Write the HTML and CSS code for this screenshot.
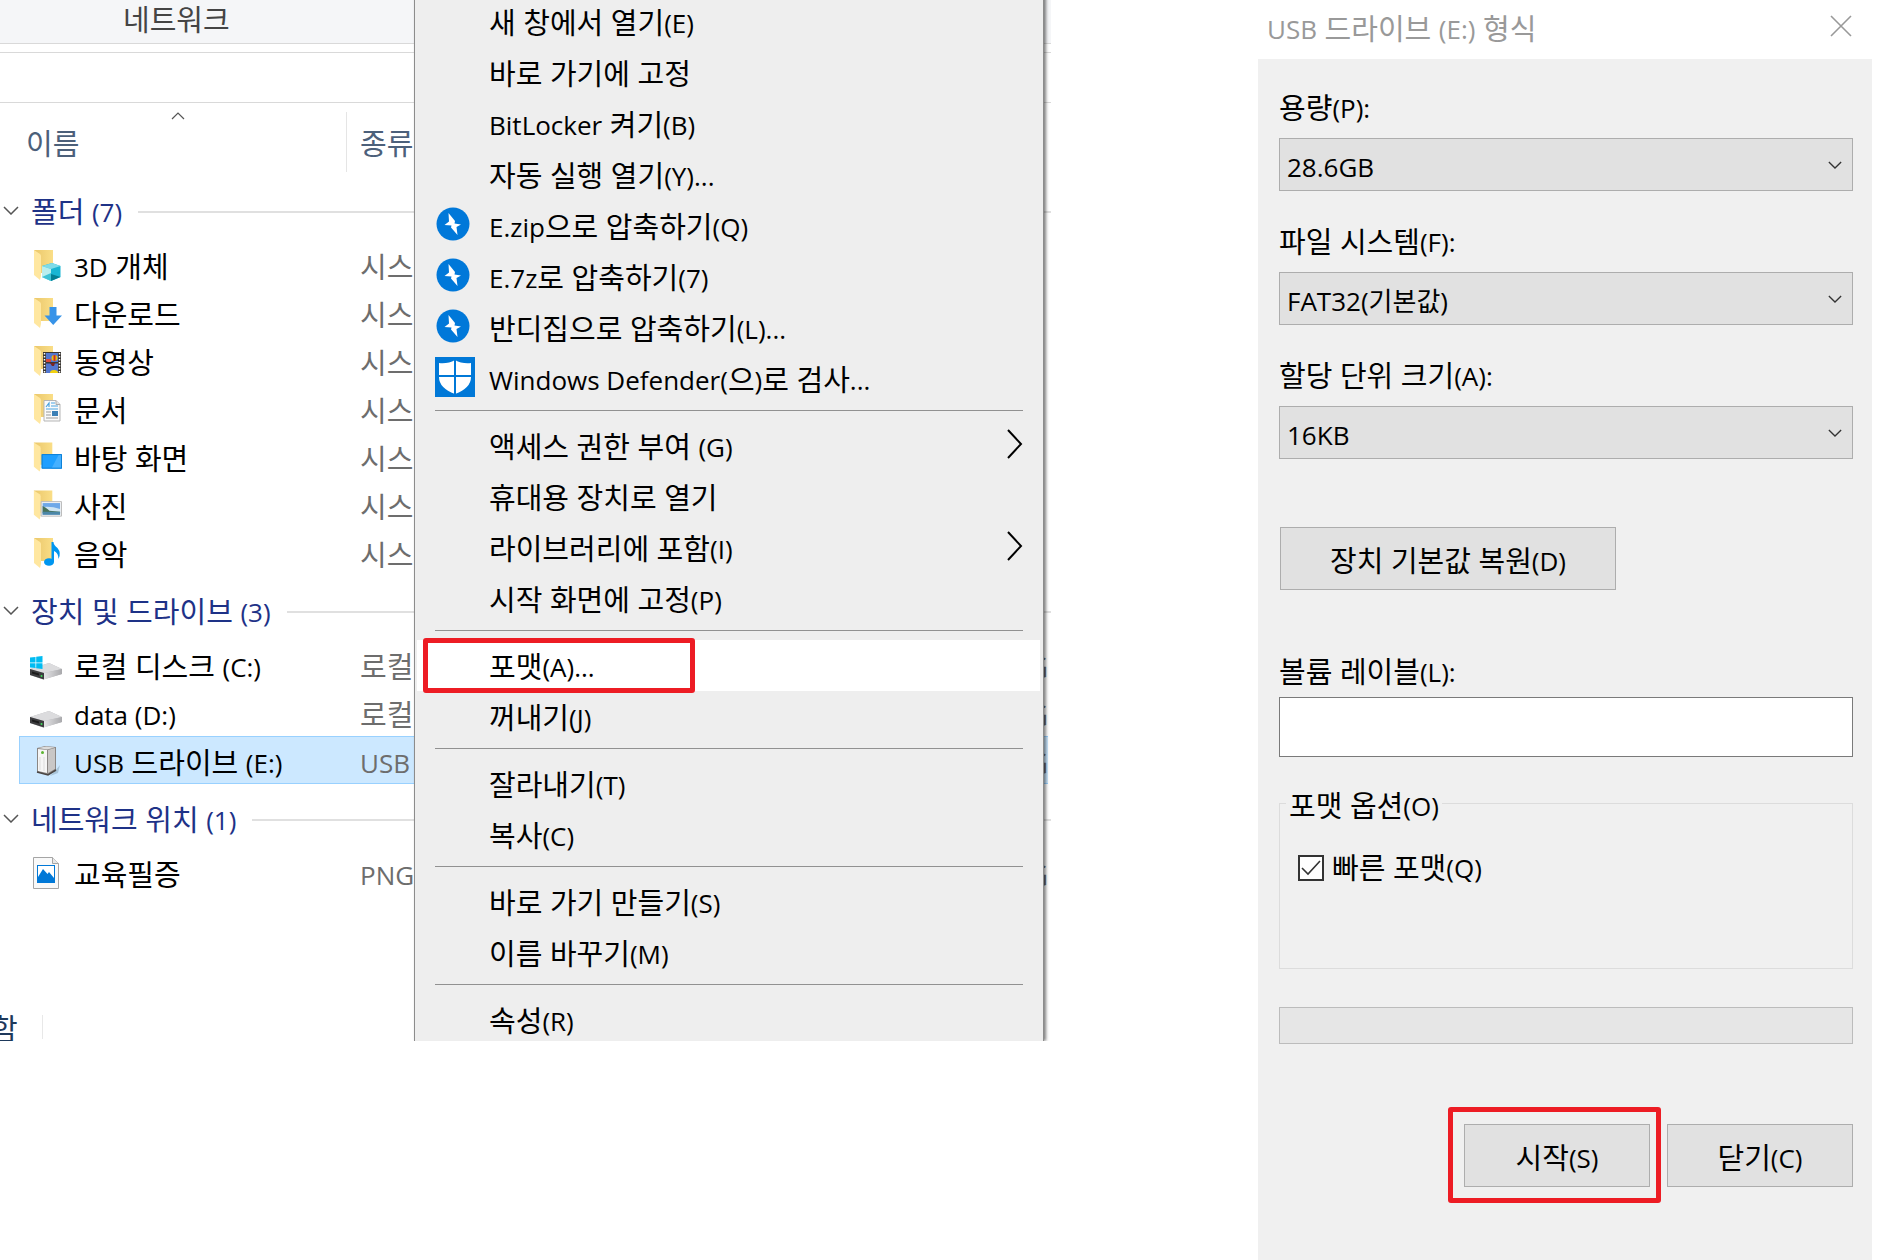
FILE: index.html
```html
<!doctype html>
<html lang="ko">
<head>
  <meta charset="utf-8">
  <title>USB 드라이브 포맷</title>
  <link rel="stylesheet" href="styles.css">
</head>
<body>
  <svg class="defs">
    <defs>
      <linearGradient id="gold" x1="0" y1="0" x2="1" y2="0">
        <stop offset="0" stop-color="#eac76b"/>
        <stop offset="1" stop-color="#fade87"/>
      </linearGradient>
      <linearGradient id="metal" x1="0" y1="0" x2="1" y2="0">
        <stop offset="0" stop-color="#e4e4e6"/>
        <stop offset="1" stop-color="#a9a9ac"/>
      </linearGradient>
    </defs>
    <symbol id="folder" viewBox="0 0 32 32">
      <path d="M4 1h19v23H9z" fill="url(#gold)"/>
      <path d="M4 1l6 4q1 1 1 2v20l-1 4-6-5z" fill="#ffe7a0"/>
    </symbol>
    <symbol id="drive" viewBox="0 0 32 32">
      <path d="M0 20L19 14l13 6v5L13 30.500 0 26z" fill="#b9b9bc"/>
      <path d="M0 20L19 14l13 6-18 4z" fill="#dcdcde"/>
      <path d="M14 24l18-4v5l-18 5.500z" fill="url(#metal)"/>
      <path d="M0 20l14 4v6.500L0 26z" fill="#3d3d3f"/>
      <path d="M2 22.500l7 2v2l-7-2z" fill="#1c1c1c"/>
      <circle cx="11.500" cy="27" r="1" fill="#3fe05a"/>
    </symbol>
    <symbol id="down" viewBox="0 0 16 9">
      <path d="M1 1l7 7 7-7" fill="none" stroke="currentColor" stroke-width="1.500"/>
    </symbol>
    <symbol id="more" viewBox="0 0 16 30">
      <path d="M1 1l13 14L1 29" fill="none" stroke="#000" stroke-width="2"/>
    </symbol>
    <symbol id="bolt" viewBox="0 0 34 34">
      <circle cx="17" cy="17" r="16.500" fill="#0078d9"/>
      <path d="M12.500 6L19 14l-.5 2.500 6.500 1-4.500 2.500 1 8-6.500-7.500.5-2-7-.5 4.500-3.500z" fill="#fff"/>
    </symbol>
  </svg>

  <main class="explorer">
    <div class="ribbon">네트워크</div>
    <div class="address"></div>
    <table class="files">
      <colgroup>
        <col class="col-name">
        <col class="col-type">
        <col>
      </colgroup>
      <thead>
        <tr>
          <th>이름<svg class="sort" viewBox="0 0 14 8"><path d="M1 7l6-6 6 6" fill="none" stroke="#555" stroke-width="1.200"/></svg></th>
          <th>종류</th>
          <th></th>
        </tr>
      </thead>
      <tbody>
        <tr class="group">
          <th colspan="3"><div><svg><use href="#down"/></svg><span>폴더 <span class="en">(7)</span></span></div></th>
        </tr>
        <tr>
          <td><div><svg viewBox="0 0 32 32"><use href="#folder"/><path d="M12 17l10-3 8.500 3v11L21 32l-9-4z" fill="#19b5d3"/><path d="M12 17l10-3 8.500 3L21 20z" fill="#7fdbe8"/><path d="M12 17l9 3v12l-9-4z" fill="#b9eeee"/><path d="M12 28l9-4v8z" fill="#3fc3d6"/><path d="M21 32l9.500-4L21 25z" fill="#047e93"/></svg><span><span class="en">3D</span> 개체</span></div></td>
          <td>시스</td>
          <td></td>
        </tr>
        <tr>
          <td><div><svg viewBox="0 0 32 32"><use href="#folder"/><path d="M19.500 10h7v8.500H32L23.200 28l-8.700-9.500h5z" fill="#3793e8"/></svg>다운로드</div></td>
          <td>시스</td>
          <td></td>
        </tr>
        <tr>
          <td><div><svg viewBox="0 0 32 32"><use href="#folder"/><path d="M13 7h18v21H13z" fill="#3a3632"/><path d="M16 8h12v9H16zM16 18.500h12V28H16z" fill="#5377cf"/><path d="M14.500 8v20M29.500 8v20" stroke="#fff" stroke-width="1.500" stroke-dasharray="1.500 1.500"/><circle cx="24.500" cy="13" r="3" fill="#e8bd13"/><path d="M23.500 10h2v6h-2z" fill="#c9302c"/><path d="M16 14h5v3h-5z" fill="#d8483a"/><path d="M20 28q0-3 4-3t4 3z" fill="#f2d10f"/><path d="M20 18h5l-1 3h-2z" fill="#7a2520"/></svg>동영상</div></td>
          <td>시스</td>
          <td></td>
        </tr>
        <tr>
          <td><div><svg viewBox="0 0 32 32"><use href="#folder"/><path d="M14 7.500h12l4 4V28H14z" fill="#fafafa" stroke="#b5b5b5"/><path d="M26 7.500v4h4" fill="#e4e4e4" stroke="#aaa"/><path d="M16 14l3-4v4M21 10h4M21 13h7M16 16h12" fill="none" stroke="#4aa3e0" stroke-width="1.200"/><path d="M16 19h5M16 22h5M16 25h12" stroke="#999"/><path d="M22 18h6v5h-6z" fill="#3b7fb5"/></svg>문서</div></td>
          <td>시스</td>
          <td></td>
        </tr>
        <tr>
          <td><div><svg viewBox="0 0 33 32"><use href="#folder" width="32" height="32"/><path d="M12 13h21v15H12z" fill="#1e9fff"/><path d="M22 28l8-15h3v15z" fill="#45b0ff"/><path d="M12.500 13.500h20v14h-20z" fill="none" stroke="#0c7fd6"/></svg>바탕 화면</div></td>
          <td>시스</td>
          <td></td>
        </tr>
        <tr>
          <td><div><svg viewBox="0 0 33 32"><use href="#folder" width="32" height="32"/><path d="M11.500 12.500h21v15h-21z" fill="#f4f4f4" stroke="#bbb"/><path d="M13 14h18v12H13z" fill="#6ea8e8"/><path d="M13 18q9-1 18 2v4H13z" fill="#cfe5f3"/><path d="M13 17q4 2 7 5l11 1v1H13z" fill="#47725a"/><path d="M13 23h18v3H13z" fill="#4c87a6"/></svg>사진</div></td>
          <td>시스</td>
          <td></td>
        </tr>
        <tr>
          <td><div><svg viewBox="0 0 32 32"><use href="#folder"/><ellipse cx="19" cy="25" rx="5" ry="3.800" fill="#0096f0"/><path d="M21.500 25V5h2q0 3 4 6 4 5 1 11 0-6-4.500-8v11z" fill="#0096f0"/></svg>음악</div></td>
          <td>시스</td>
          <td></td>
        </tr>
      </tbody>
      <tbody>
        <tr class="group">
          <th colspan="3"><div><svg><use href="#down"/></svg><span>장치 및 드라이브 <span class="en">(3)</span></span></div></th>
        </tr>
        <tr>
          <td><div><svg viewBox="0 0 32 32"><use href="#drive"/><path d="M0 8.500L5.500 8v5.500H0zM6.200 7.800L12.500 7v6.500H6.200zM0 14.200h5.500V19L0 18.500zM6.200 14.200h6.300V20l-6.300-.8z" fill="#00bcf2"/></svg><span>로컬 디스크 <span class="en">(C:)</span></span></div></td>
          <td>로컬</td>
          <td>G</td>
        </tr>
        <tr>
          <td><div><svg viewBox="0 0 32 32"><use href="#drive"/></svg><span class="en">data (D:)</span></div></td>
          <td>로컬</td>
          <td>G</td>
        </tr>
        <tr class="selected">
          <td><div><svg viewBox="0 0 32 32"><path d="M24 27l6-7-2 8-8 3z" fill="#a9c5da"/><path d="M7 3l8-2 11 1v23l-8 5-11-3z" fill="#8a8684"/><path d="M8 4l9 1v23l-9-2z" fill="#f6f6f6"/><path d="M18 5l7-2v21l-7 4z" fill="#c9c7c6"/><path d="M8 3l8-1.500 9 1L17 4.500z" fill="#dcdcdc"/><circle cx="12.500" cy="7.500" r="1.500" fill="#5cb531"/><path d="M10 12v13M14 12v14" stroke="#ddd"/><path d="M7 27l11 3 8-5" fill="none" stroke="#4b4644" stroke-width="1.500"/></svg><span><span class="en">USB</span> 드라이브 <span class="en">(E:)</span></span></div></td>
          <td><span class="en">USB</span></td>
          <td>G</td>
        </tr>
      </tbody>
      <tbody>
        <tr class="group">
          <th colspan="3"><div><svg><use href="#down"/></svg><span>네트워크 위치 <span class="en">(1)</span></span></div></th>
        </tr>
        <tr>
          <td><div><svg viewBox="0 0 32 32"><path d="M3.500.5h19l6 6v25h-25z" fill="#f9f9f9" stroke="#a5a5a5"/><path d="M22.500.5v6h6" fill="#e8e8e8" stroke="#a5a5a5"/><path d="M7 8h18v18H7z" fill="#0078d7"/><path d="M8 9h16v12l-5-6-1.500 2L13 12l-5 8z" fill="#fff"/></svg>교육필증</div></td>
          <td><span class="en">PNG</span></td>
          <td>G</td>
        </tr>
      </tbody>
    </table>
    <div class="status"><span>함</span></div>

    <menu class="context">
      <li><button>새 창에서 열기<span class="en">(E)</span></button></li>
      <li><button>바로 가기에 고정</button></li>
      <li><button><span class="en">BitLocker</span> 켜기<span class="en">(B)</span></button></li>
      <li><button>자동 실행 열기<span class="en">(Y)...</span></button></li>
      <li><button><svg class="zip"><use href="#bolt"/></svg><span class="en">E.zip</span>으로 압축하기<span class="en">(Q)</span></button></li>
      <li><button><svg class="zip"><use href="#bolt"/></svg><span class="en">E.7z</span>로 압축하기<span class="en">(7)</span></button></li>
      <li><button><svg class="zip"><use href="#bolt"/></svg>반디집으로 압축하기<span class="en">(L)...</span></button></li>
      <li><button><svg class="shield" viewBox="0 0 40 40"><path d="M0 0h40v40H0z" fill="#0078d7"/><path d="M4 6q9 1 16-3 7 4 16 3v14q0 11-16 17Q4 31 4 20z" fill="#fff"/><path d="M20 2v36M3 19h34" stroke="#0078d7" stroke-width="2"/></svg><span class="en">Windows Defender(</span>으<span class="en">)</span>로 검사<span class="en">...</span></button></li>
      <li class="separator"></li>
      <li><button>액세스 권한 부여 <span class="en">(G)</span><svg class="submenu"><use href="#more"/></svg></button></li>
      <li><button>휴대용 장치로 열기</button></li>
      <li><button>라이브러리에 포함<span class="en">(I)</span><svg class="submenu"><use href="#more"/></svg></button></li>
      <li><button>시작 화면에 고정<span class="en">(P)</span></button></li>
      <li class="separator"></li>
      <li><button class="active">포맷<span class="en">(A)...</span></button></li>
      <li><button>꺼내기<span class="en">(J)</span></button></li>
      <li class="separator"></li>
      <li><button>잘라내기<span class="en">(T)</span></button></li>
      <li><button>복사<span class="en">(C)</span></button></li>
      <li class="separator"></li>
      <li><button>바로 가기 만들기<span class="en">(S)</span></button></li>
      <li><button>이름 바꾸기<span class="en">(M)</span></button></li>
      <li class="separator"></li>
      <li><button>속성<span class="en">(R)</span></button></li>
    </menu>
  </main>

  <section class="dialog">
    <header>
      <h1><span class="en">USB</span> 드라이브 <span class="en">(E:)</span> 형식</h1>
      <button class="close" aria-label="닫기"><svg viewBox="0 0 22 22"><path d="M1 1l20 20M21 1L1 21" stroke="#999" stroke-width="1.600"/></svg></button>
    </header>
    <form>
      <div class="field">
        <label for="capacity">용량<span class="en">(P):</span></label>
        <div class="select">
          <select id="capacity"><option>28.6GB</option></select>
          <svg><use href="#down"/></svg>
        </div>
      </div>
      <div class="field">
        <label for="fs">파일 시스템<span class="en">(F):</span></label>
        <div class="select">
          <select id="fs"><option>FAT32(기본값)</option></select>
          <svg><use href="#down"/></svg>
        </div>
      </div>
      <div class="field">
        <label for="unit">할당 단위 크기<span class="en">(A):</span></label>
        <div class="select">
          <select id="unit"><option>16KB</option></select>
          <svg><use href="#down"/></svg>
        </div>
      </div>
      <button type="button" class="btn restore">장치 기본값 복원<span class="en">(D)</span></button>
      <div class="volume">
        <label for="volume">볼륨 레이블<span class="en">(L):</span></label>
        <input id="volume" type="text">
      </div>
      <fieldset>
        <legend>포맷 옵션<span class="en">(O)</span></legend>
        <div class="check">
          <input id="quick" type="checkbox" checked>
          <label for="quick">빠른 포맷<span class="en">(Q)</span></label>
          <svg viewBox="0 0 26 26"><path d="M4 13l6 6L22 6" fill="none" stroke="#333" stroke-width="1.600"/></svg>
        </div>
      </fieldset>
      <progress value="0" max="100" aria-label="진행률"></progress>
      <div class="actions">
        <button type="button" class="btn start">시작<span class="en">(S)</span></button>
        <button type="button" class="btn">닫기<span class="en">(C)</span></button>
      </div>
    </form>
  </section>
</body>
</html>
```

FILE: styles.css
```css
*,
*::before,
*::after {
  box-sizing: border-box;
}

body {
  display: grid;
  grid-template-columns: 1061fr 197fr 614fr;
  align-items: start;
  margin: 0;
  padding-right: 6px;
  background: #fff;
  font-family: "Open Sans", "Noto Sans CJK KR", sans-serif;
  font-size: 29px;
  line-height: 40px;
  color: #000;
}

button,
input,
select {
  font: inherit;
  color: inherit;
}

/* latin letters look bigger than hangul at the same size */
.en {
  font-size: 26px;
  line-height: 1;
  vertical-align: 1px;
}

.defs {
  position: absolute;
  width: 0;
  height: 0;
}

/* explorer */

.explorer {
  position: relative;
  overflow: hidden;
  white-space: nowrap;
}

.ribbon {
  height: 44px;
  margin-right: 10px;
  padding-left: 123px;
  background: #f5f6f8;
  border-bottom: 1px solid #d9d9d9;
  color: #444;
}

.address {
  height: 51px;
  margin: 8px 10px 0 0;
  border: solid #d9d9d9;
  border-width: 1px 0;
}

.files {
  width: calc(100% - 32px);
  margin: 0 13px 0 19px;
  border-spacing: 0;
  table-layout: fixed;
}

.col-name {
  width: 328px;
}

.col-type {
  width: 400px;
}

.files th,
.files td {
  padding: 0;
  text-align: left;
  font-weight: 400;
}

.files thead th {
  position: relative;
  height: 73px;
  padding: 8px 0 0 13px;
  color: #4c607a;
}

.files thead th:first-child {
  padding-left: 7px;
}

.files thead th:first-child::after {
  content: "";
  position: absolute;
  top: 9px;
  right: 0;
  width: 1px;
  height: 60px;
  background: #e5e5e5;
}

.sort {
  position: absolute;
  top: 9px;
  left: 152px;
  width: 14px;
  height: 8px;
}

.files td {
  height: 48px;
  padding: 6px 0 0 13px;
  color: #6d6d6d;
}

.files td:first-child {
  padding: 0 0 0 11px;
  color: #000;
}

.files td:first-child div {
  display: flex;
  align-items: center;
  gap: 12px;
  height: 46px;
  padding-top: 6px;
}

.files td:first-child svg {
  flex: none;
  width: 32px;
  height: 32px;
  margin-top: -4px;
}

.files td:last-child {
  text-align: right;
}

.files .group div {
  display: flex;
  align-items: center;
  gap: 12px;
  height: 64px;
  margin: 0 -3px 0 -16px;
  padding-top: 8px;
  color: #1e3287;
}

.files .group svg {
  width: 16px;
  height: 9px;
  margin-top: -4px;
  color: #555;
}

.files .group div::after {
  content: "";
  flex: 1;
  height: 2px;
  margin-left: 4px;
  background: #e0e0e0;
}

.files .selected td {
  background: #cce8ff;
  border: solid #99d1ff;
  border-width: 1px 0;
}

.files .selected td:first-child {
  padding-left: 10px;
  border-left-width: 1px;
}

.status {
  display: flex;
  height: 26px;
  margin-top: 119px;
  color: #1e395b;
}

.status span {
  height: 24px;
  margin-left: -9px;
  padding-right: 24px;
  border-right: 1px solid #e8e8e8;
  line-height: 28px;
}

/* context menu over the file list */

.context {
  position: absolute;
  top: -4px;
  right: 17px;
  bottom: 0;
  left: 414px;
  margin: 0;
  padding: 0 3px 0 2px;
  overflow: visible;
  list-style: none;
  background: #eee;
  border: solid #8c8c8c;
  border-width: 0 1px;
  box-shadow: 2px 0 3px rgba(0, 0, 0, .5);
}

.context button {
  position: relative;
  display: block;
  width: 100%;
  height: 51px;
  padding: 2px 0 0 72px;
  background: none;
  border: 0;
  text-align: left;
}

.context .active {
  background: #fff;
}

.context .active::after,
.start::after {
  content: "";
  position: absolute;
  border: 5px solid #ed1c24;
  border-radius: 3px;
}

.context .active::after {
  top: -2px;
  left: 6px;
  width: 272px;
  height: 55px;
}

.context .separator {
  height: 16px;
  margin: 0 17px 0 18px;
  padding-top: 6px;
}

.context .separator::before {
  content: "";
  display: block;
  height: 1px;
  background: #919191;
}

.context svg {
  position: absolute;
}

.zip {
  top: 7px;
  left: 19px;
  width: 34px;
  height: 34px;
}

.shield {
  top: 4px;
  left: 18px;
  width: 40px;
  height: 40px;
}

.submenu {
  top: 9px;
  right: 17px;
  width: 16px;
  height: 30px;
}

/* format dialog */

.dialog {
  grid-column: 3;
  display: flex;
  flex-direction: column;
  min-height: 100vh;
}

.dialog header {
  display: flex;
  justify-content: space-between;
  align-items: center;
  height: 59px;
  padding: 0 20px 2px 9px;
}

.dialog h1 {
  margin: 0;
  font-size: 29px;
  font-weight: 400;
  color: #999;
}

.close {
  width: 22px;
  height: 22px;
  margin-bottom: 6px;
  padding: 0;
  background: none;
  border: 0;
}

.close svg {
  display: block;
}

.dialog form {
  flex: 1;
  padding: 29px 19px 0 21px;
  background: #f0f0f0;
}

.field {
  margin-bottom: 31px;
}

.field label,
.volume label {
  display: block;
}

.select {
  display: grid;
  align-items: center;
  margin-top: 10px;
}

.select select,
.select svg {
  grid-area: 1 / 1;
}

.select select {
  height: 53px;
  padding: 4px 7px 0;
  appearance: none;
  background: #e1e1e1;
  border: 1px solid #adadad;
  border-radius: 0;
  font-size: 26px;
}

.select svg {
  justify-self: end;
  width: 14px;
  height: 8px;
  margin-right: 11px;
  color: #333;
  pointer-events: none;
}

.btn {
  width: 186px;
  height: 63px;
  padding: 4px 0 0;
  background: #e1e1e1;
  border: 1px solid #adadad;
}

.restore {
  display: block;
  width: 336px;
  margin: 68px 0 62px 1px;
}

.volume input {
  display: block;
  width: 100%;
  height: 60px;
  margin-top: 5px;
  padding: 0 8px;
  background: #fff;
  border: 1px solid #7a7a7a;
}

fieldset {
  height: 186px;
  margin: 26px 0 38px;
  padding: 25px 18px 0;
  border: 1px solid #dcdcdc;
}

legend {
  margin-left: -12px;
  padding: 6px 3px 0;
  line-height: 34px;
}

.check {
  display: grid;
  grid-template-columns: 26px 1fr;
  align-items: center;
  gap: 8px;
}

.check input {
  grid-area: 1 / 1;
  width: 26px;
  height: 26px;
  margin: 0;
  appearance: none;
  background: #fff;
  border: 2px solid #333;
}

.check svg {
  grid-area: 1 / 1;
  width: 26px;
  height: 26px;
  pointer-events: none;
}

progress {
  display: block;
  width: 100%;
  height: 37px;
  appearance: none;
  background: #e6e6e6;
  border: 1px solid #bcbcbc;
}

progress::-webkit-progress-bar {
  background: #e6e6e6;
}

.actions {
  display: flex;
  justify-content: flex-end;
  gap: 17px;
  margin-top: 80px;
}

.start {
  position: relative;
}

.start::after {
  top: -18px;
  right: -12px;
  bottom: -17px;
  left: -17px;
}
```
